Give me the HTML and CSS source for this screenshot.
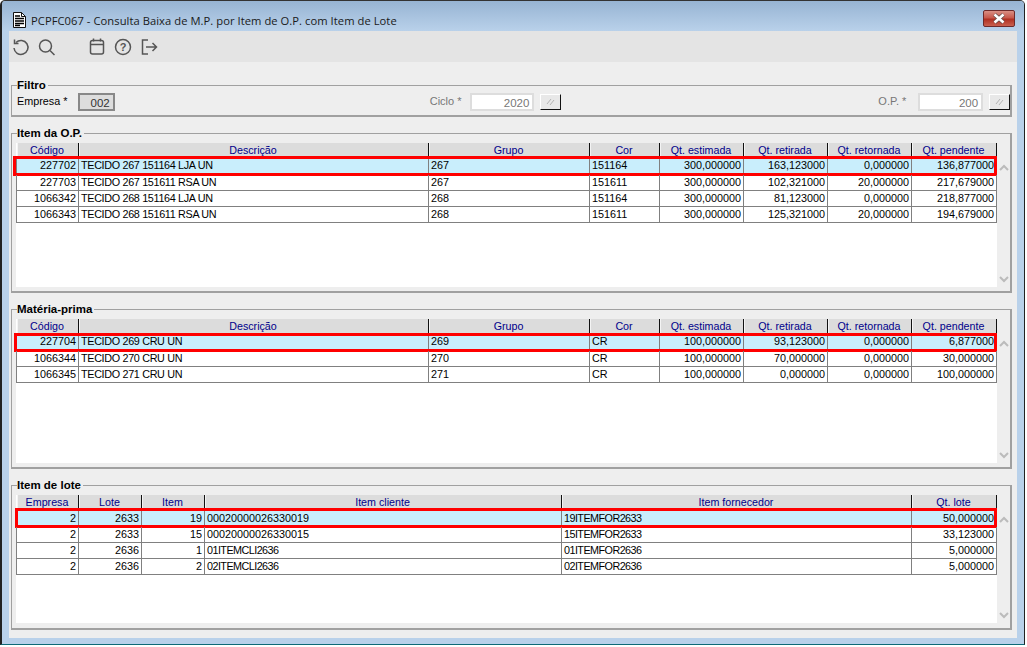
FILE: index.html
```html
<!DOCTYPE html>
<html lang="pt">
<head>
<meta charset="utf-8">
<title>PCPFC067</title>
<link rel="stylesheet" href="styles.css">
</head>
<body>
<div class="window">
  <header class="titlebar">
    <svg class="doc" width="13" height="16" viewBox="0 0 13 16"><path d="M.5.5h8l4 4v11H.5z" fill="#fff" stroke="#111"/><path d="M8.500.5v4h4" fill="none" stroke="#111"/><path d="M2 4h5M2 6.500h9M2 9h9M2 11.500h9M2 13.500h5" stroke="#000" stroke-width="1.300"/></svg>
    <span class="title">PCPFC067 - Consulta Baixa de M.P. por Item de O.P. com Item de Lote</span>
    <button class="close" aria-label="Fechar"><svg width="16" height="11" viewBox="0 0 16 11"><path d="M3.500 1.500l9 8M12.500 1.500l-9 8" stroke="#5d4a48" stroke-width="4"/><path d="M3.500 1.500l9 8M12.500 1.500l-9 8" stroke="#fff" stroke-width="2.600"/></svg></button>
  </header>
  <nav class="toolbar">
    <svg class="tool" width="20" height="20" viewBox="0 0 20 20"><path d="M5 5.500A7 7 0 1 1 3 11" fill="none" stroke="#555" stroke-width="1.500"/><path d="M3.500 2.500v4h4" fill="none" stroke="#555" stroke-width="1.500"/></svg>
    <svg class="tool" width="20" height="20" viewBox="0 0 20 20"><circle cx="8.500" cy="9" r="6" fill="none" stroke="#555" stroke-width="1.500"/><path d="M13 13.500l4.500 4.500" stroke="#555" stroke-width="1.500"/></svg>
    <span class="tool-gap"></span>
    <svg class="tool" width="20" height="20" viewBox="0 0 20 20"><rect x="3.500" y="3.500" width="13" height="13.500" rx="2" fill="none" stroke="#555" stroke-width="1.500"/><path d="M3.500 7.500h13M6.500 1.500v3M13.500 1.500v3" stroke="#555" stroke-width="1.500"/></svg>
    <svg class="tool" width="20" height="20" viewBox="0 0 20 20"><circle cx="10" cy="10" r="7.500" fill="none" stroke="#555" stroke-width="1.500"/><text x="10" y="14" class="qmark">?</text></svg>
    <svg class="tool" width="20" height="20" viewBox="0 0 20 20"><path d="M9 3H3.500v14H9" fill="none" stroke="#555" stroke-width="1.500"/><path d="M7 10h10M13.500 6l4 4-4 4" fill="none" stroke="#555" stroke-width="1.500"/></svg>
  </nav>
  <main class="content">
    <fieldset class="group filter">
      <legend>Filtro</legend>
      <div class="filter-row">
        <label class="lbl lbl-empresa">Empresa *</label>
        <div class="inp inp-ro">002</div>
        <label class="lbl lbl-ciclo dim">Ciclo *</label>
        <div class="inp inp-num dim">2020</div>
        <button class="pick"><svg width="11" height="8" viewBox="0 0 11 8"><path d="M2 6l4-5M5 7l4-5" stroke="#b4b4b4"/></svg></button>
        <label class="lbl lbl-op dim">O.P. *</label>
        <div class="inp inp-num dim">200</div>
        <button class="pick"><svg width="11" height="8" viewBox="0 0 11 8"><path d="M2 6l4-5M5 7l4-5" stroke="#b4b4b4"/></svg></button>
      </div>
    </fieldset>

    <fieldset class="group gridbox h-op">
      <legend>Item da O.P.</legend>
      <div class="gridwrap">
        <div class="table t8">
          <div class="row head"><span>Código</span><span>Descrição</span><span>Grupo</span><span>Cor</span><span>Qt. estimada</span><span>Qt. retirada</span><span>Qt. retornada</span><span>Qt. pendente</span></div>
          <div class="row sel"><span class="n">227702</span><span class="tc">TECIDO 267 151164 LJA UN</span><span>267</span><span>151164</span><span class="n">300,000000</span><span class="n">163,123000</span><span class="n">0,000000</span><span class="n">136,877000</span></div>
          <div class="row"><span class="n">227703</span><span class="tc">TECIDO 267 151611 RSA UN</span><span>267</span><span>151611</span><span class="n">300,000000</span><span class="n">102,321000</span><span class="n">20,000000</span><span class="n">217,679000</span></div>
          <div class="row"><span class="n">1066342</span><span class="tc">TECIDO 268 151164 LJA UN</span><span>268</span><span>151164</span><span class="n">300,000000</span><span class="n">81,123000</span><span class="n">0,000000</span><span class="n">218,877000</span></div>
          <div class="row"><span class="n">1066343</span><span class="tc">TECIDO 268 151611 RSA UN</span><span>268</span><span>151611</span><span class="n">300,000000</span><span class="n">125,321000</span><span class="n">20,000000</span><span class="n">194,679000</span></div>
        </div>
        <div class="scroll"><svg width="12" height="8" viewBox="0 0 12 8"><path d="M2 6l4-4 4 4" fill="none" stroke="#bbb" stroke-width="2"/></svg><svg width="12" height="8" viewBox="0 0 12 8"><path d="M2 2l4 4 4-4" fill="none" stroke="#bbb" stroke-width="2"/></svg></div>
      </div>
    </fieldset>

    <fieldset class="group gridbox h-mp">
      <legend>Matéria-prima</legend>
      <div class="gridwrap">
        <div class="table t8">
          <div class="row head"><span>Código</span><span>Descrição</span><span>Grupo</span><span>Cor</span><span>Qt. estimada</span><span>Qt. retirada</span><span>Qt. retornada</span><span>Qt. pendente</span></div>
          <div class="row sel"><span class="n">227704</span><span class="tc">TECIDO 269 CRU UN</span><span>269</span><span>CR</span><span class="n">100,000000</span><span class="n">93,123000</span><span class="n">0,000000</span><span class="n">6,877000</span></div>
          <div class="row"><span class="n">1066344</span><span class="tc">TECIDO 270 CRU UN</span><span>270</span><span>CR</span><span class="n">100,000000</span><span class="n">70,000000</span><span class="n">0,000000</span><span class="n">30,000000</span></div>
          <div class="row"><span class="n">1066345</span><span class="tc">TECIDO 271 CRU UN</span><span>271</span><span>CR</span><span class="n">100,000000</span><span class="n">0,000000</span><span class="n">0,000000</span><span class="n">100,000000</span></div>
        </div>
        <div class="scroll"><svg width="12" height="8" viewBox="0 0 12 8"><path d="M2 6l4-4 4 4" fill="none" stroke="#bbb" stroke-width="2"/></svg><svg width="12" height="8" viewBox="0 0 12 8"><path d="M2 2l4 4 4-4" fill="none" stroke="#bbb" stroke-width="2"/></svg></div>
      </div>
    </fieldset>

    <fieldset class="group gridbox h-lote">
      <legend>Item de lote</legend>
      <div class="gridwrap">
        <div class="table t6">
          <div class="row head"><span>Empresa</span><span>Lote</span><span>Item</span><span>Item cliente</span><span>Item fornecedor</span><span>Qt. lote</span></div>
          <div class="row sel"><span class="n">2</span><span class="n">2633</span><span class="n">19</span><span>00020000026330019</span><span class="ti">19ITEMFOR2633</span><span class="n">50,000000</span></div>
          <div class="row"><span class="n">2</span><span class="n">2633</span><span class="n">15</span><span>00020000026330015</span><span class="ti">15ITEMFOR2633</span><span class="n">33,123000</span></div>
          <div class="row"><span class="n">2</span><span class="n">2636</span><span class="n">1</span><span class="ti">01ITEMCLI2636</span><span class="ti">01ITEMFOR2636</span><span class="n">5,000000</span></div>
          <div class="row"><span class="n">2</span><span class="n">2636</span><span class="n">2</span><span class="ti">02ITEMCLI2636</span><span class="ti">02ITEMFOR2636</span><span class="n">5,000000</span></div>
        </div>
        <div class="scroll"><svg width="12" height="8" viewBox="0 0 12 8"><path d="M2 6l4-4 4 4" fill="none" stroke="#bbb" stroke-width="2"/></svg><svg width="12" height="8" viewBox="0 0 12 8"><path d="M2 2l4 4 4-4" fill="none" stroke="#bbb" stroke-width="2"/></svg></div>
      </div>
    </fieldset>
  </main>
</div>
</body>
</html>
```

FILE: styles.css
```css
* { box-sizing: border-box; }
html, body { margin: 0; height: 100%; background: #fff; overflow: hidden; }
body { font: 11px "Liberation Sans", Arial, sans-serif; color: #000; }

.window {
  width: 1025px;
  height: 645px;
  display: flex;
  flex-direction: column;
  padding: 0 7px 6px 7px;
  background: #b9d1ea;
  border-left: 2px solid #222;
  border-right: 1px solid #222;
  border-top: 1px solid #333;
  border-bottom: 1px solid #0d6a78;
  border-radius: 5px 5px 0 0;
}

.titlebar {
  flex: 0 0 30px;
  margin: 0 -7px;
  padding: 8px 9px 0 9px;
  display: flex;
  align-items: center;
  gap: 5px;
  background: linear-gradient(#97b4d3, #b9d1ea);
  border-radius: 4px 4px 0 0;
}
.doc { flex: none; margin-left: 2px; }
.title { font: 11.200px "Open Sans", sans-serif; letter-spacing: .05px; color: #1a1a1a; flex: 1; }
.close {
  width: 32px; height: 17px; padding: 0;
  margin-top: -3px;
  display: flex; align-items: center; justify-content: center;
  background: linear-gradient(#d98f84 0, #c7594c 45%, #b03022 55%, #c9604f 100%);
  border: 1px solid #6d2a2a;
  border-radius: 2px;
}

.toolbar {
  flex: 0 0 31px;
  display: flex;
  align-items: center;
  padding-left: 2px;
  gap: 6px;
  background: #e4e4e4;
}
.tool { flex: none; }
.tool-gap { width: 18px; }
.qmark { font: bold 11px "Liberation Sans", sans-serif; fill: #555; text-anchor: middle; }

.content {
  flex: 1;
  display: flex;
  flex-direction: column;
  background: #eee;
  padding: 16px 5px 0 2px;
  min-height: 0;
}

.group {
  margin: 0;
  padding: 0 0 0 4px;
  border: 1px solid #a0a0a0;
  border-width: 1px 2px 2px 1px;
  min-width: 0;
}
.group legend {
  margin-left: 1px;
  padding: 0 2px 0 0;
  font: bold 11.500px/14px "Liberation Sans", sans-serif;
  color: #000;
}
.filter { height: 39px; }
.h-op { height: 167px; margin-top: 9px; }
.h-mp { height: 167px; margin-top: 9px; }
.h-lote { height: 152px; margin-top: 9px; }

.filter-row { display: flex; align-items: center; height: 18px; margin-top: 1px; padding-left: 1px; }
.lbl { line-height: 16px; align-self: flex-start; }
.lbl-empresa { width: 61px; font-size: 10.800px; }
.lbl-ciclo { margin-left: 315px; width: 40px; }
.lbl-op { margin-left: 317px; width: 40px; }
.dim { color: #777; }
.inp {
  height: 18px;
  text-align: right;
  line-height: 14px;
  padding: 1px 3px 0 0;
  border: 2px solid #ddd;
  background: #fff;
  font-size: 11.500px;
}
.inp-ro { width: 37px; background: #ddd; border-color: #888; color: #333; }
.inp-num { width: 65px; }
.pick {
  width: 21px; height: 16px; margin-left: 6px; padding: 0;
  display: flex; align-items: center; justify-content: center;
  background: #e8e8e8;
  border: 1px solid #fff;
  border-right-color: #111; border-bottom-color: #111;
}

.gridwrap { display: flex; height: 144px; margin-top: 3px; }
.h-lote .gridwrap { height: 128px; }
.table { width: 981px; background: #fff; padding-left: 1px; flex: none; }
.row { display: grid; height: 16px; position: relative; box-shadow: -1px 0 0 #808080; }
.t8 .row { grid-template-columns: 62px 350px 161px 70px 84px 84px 84px 85px; }
.t6 .row { grid-template-columns: 62px 63px 63px 357px 350px 85px; }
.row > span {
  display: block;
  padding: 0 1px 0 2px;
  line-height: 15px;
  white-space: nowrap;
  overflow: hidden;
  border-right: 1px solid #808080;
  border-bottom: 1px solid #808080;
  font-size: 10.800px;
}
.row > .n { text-align: right; padding-right: 2px; }
.row > .tc { letter-spacing: -.33px; }
.row > .ti { letter-spacing: -.55px; }
.row.head { box-shadow: none; }
.row.head > span {
  padding: 0 3px 0 1px;
  background: #dcdcdc;
  color: #00008b;
  text-align: center;
  border-right: 1px solid #111;
  border-left: 1px solid #f4f4f4;
  border-bottom: 0;
  font-size: 10.700px;
}
.row.sel > span { background: #c9eefc; }
.t8 .row.sel > span { line-height: 13px; }
.row.sel::after {
  content: "";
  position: absolute;
  inset: -3px 0 -1px -4px;
  border: 3px solid #f00;
  pointer-events: none;
}
.h-mp .row.sel::after { inset: -2px 0 -1px -3px; }
.h-lote .row.sel::after { inset: -3px 0 -1px -2px; }
.scroll {
  width: 14px;
  display: flex;
  flex-direction: column;
  justify-content: space-between;
  align-items: center;
  padding: 21px 0 4px;
}
```
